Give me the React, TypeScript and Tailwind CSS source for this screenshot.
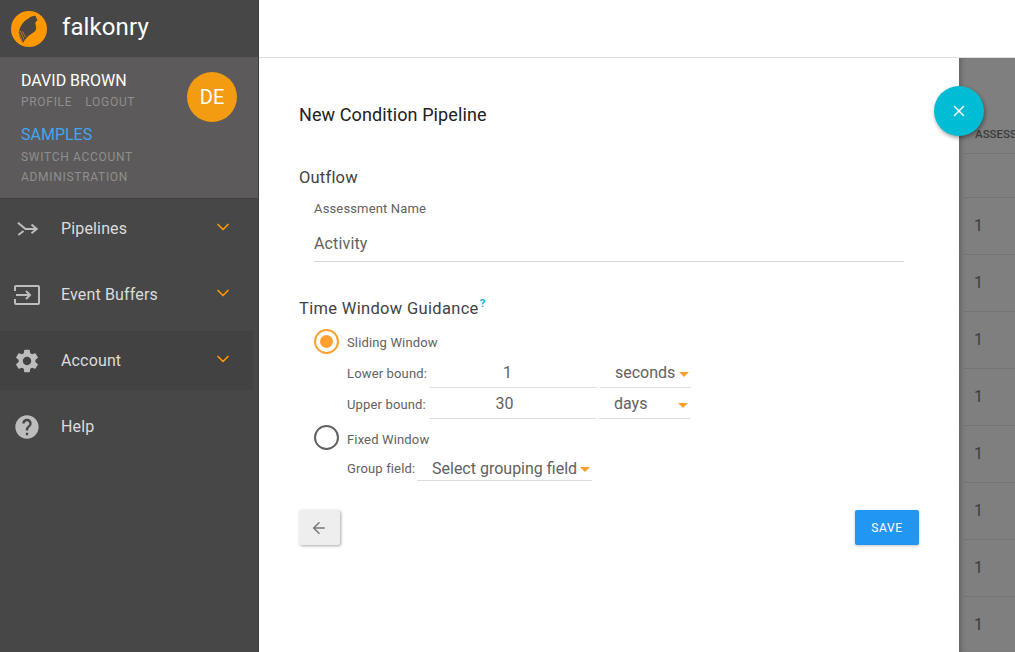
import { ArrowLeft, ChevronDown, X } from "lucide-react";

const navItems = [
  { label: "Pipelines", icon: "pipelines", chevron: true },
  { label: "Event Buffers", icon: "buffers", chevron: true },
  { label: "Account", icon: "account", chevron: true, active: true },
  { label: "Help", icon: "help", chevron: false },
];

function NavIcon({ name }: { name: string }) {
  if (name === "pipelines") {
    return (
      <svg width="26" height="24" viewBox="0 0 26 24" fill="none" stroke="#bdbdbd" strokeWidth="2">
        <path d="M5 5.7 L12.5 12 H23.5" />
        <path d="M5.3 18 L10.5 14" />
        <path d="M18.5 7.5 L23.7 12 L18.5 16.2" />
      </svg>
    );
  }
  if (name === "buffers") {
    return (
      <svg width="28" height="24" viewBox="0 0 28 24" fill="none" stroke="#bdbdbd" strokeWidth="2">
        <path d="M2 8 V4 A1 1 0 0 1 3 3 H25 A1 1 0 0 1 26 4 V20 A1 1 0 0 1 25 21 H3 A1 1 0 0 1 2 20 V16" />
        <path d="M3 12 H17" />
        <path d="M13 8 L17 12 L13 16" />
      </svg>
    );
  }
  if (name === "account") {
    return (
      <svg width="28" height="28" viewBox="0 0 24 24" fill="#bdbdbd">
        <path d="M19.14 12.94c.04-.3.06-.61.06-.94 0-.32-.02-.64-.07-.94l2.03-1.58a.49.49 0 0 0 .12-.61l-1.92-3.32a.488.488 0 0 0-.59-.22l-2.39.96c-.5-.38-1.03-.7-1.62-.94l-.36-2.54a.484.484 0 0 0-.48-.41h-3.84c-.24 0-.43.17-.47.41l-.36 2.54c-.59.24-1.13.57-1.62.94l-2.39-.96c-.22-.08-.47 0-.59.22L2.74 8.87c-.12.21-.08.47.12.61l2.03 1.58c-.05.3-.09.63-.09.94s.02.64.07.94l-2.03 1.58a.49.49 0 0 0-.12.61l1.92 3.32c.12.22.37.29.59.22l2.39-.96c.5.38 1.03.7 1.62.94l.36 2.54c.05.24.24.41.48.41h3.84c.24 0 .44-.17.47-.41l.36-2.54c.59-.24 1.13-.56 1.62-.94l2.39.96c.22.08.47 0 .59-.22l1.92-3.32c.12-.22.07-.47-.12-.61l-2.01-1.58zM12 15.6c-1.98 0-3.6-1.62-3.6-3.6s1.62-3.6 3.6-3.6 3.6 1.62 3.6 3.6-1.62 3.6-3.6 3.6z" />
      </svg>
    );
  }
  return (
    <svg width="28" height="28" viewBox="0 0 24 24" fill="#bdbdbd">
      <path d="M12 2C6.48 2 2 6.48 2 12s4.48 10 10 10 10-4.48 10-10S17.52 2 12 2zm1 17h-2v-2h2v2zm2.07-7.75-.9.92C13.45 12.9 13 13.5 13 15h-2v-.5c0-1.1.45-2.1 1.17-2.83l1.24-1.26c.37-.36.59-.86.59-1.41 0-1.1-.9-2-2-2s-2 .9-2 2H8c0-2.21 1.79-4 4-4s4 1.79 4 4c0 .88-.36 1.68-.93 2.25z" />
    </svg>
  );
}

function Logo() {
  return (
    <svg width="36" height="36" viewBox="0 0 36 36">
      <circle cx="18" cy="18" r="18" fill="#ff9800" />
      <path d="M12 32 C9 28 7.5 24 8.3 19 C10 13 14 9 17.3 7.7 C20 5.5 23 4.5 24.5 5 L26.5 9.3 C24.5 10.5 24 12 24.5 13.5 C25.5 16 25.5 18.5 24 20.3 C22 22.5 17 23.5 12 32 Z" fill="#4a4540" />
      <path d="M7.5 21 L11.5 31 M9.5 20 L13 28.5 M11.5 20.5 L14.5 26" stroke="#b9781f" strokeWidth="1" fill="none" />
    </svg>
  );
}

function Caret() {
  return <span className="block w-0 h-0 border-x-[5px] border-x-transparent border-t-[5px] border-t-[#ff9f2e]" />;
}

function Radio({ on }: { on: boolean }) {
  return (
    <span className={"w-[25px] h-[25px] rounded-full border-2 flex items-center justify-center " + (on ? "border-[#ff9f2e]" : "border-[#616161]")}>
      {on && <span className="w-[13px] h-[13px] rounded-full bg-[#ff9f2e]" />}
    </span>
  );
}

function BoundRow({ label, value, unit, labelWidth, valuePad }: { label: string; value: string; unit: string; labelWidth: string; valuePad: string }) {
  return (
    <div className="flex items-end h-[31px]">
      <span className={"text-[13px] text-[#616161] leading-[28px] tracking-[0.15px] " + labelWidth}>{label}</span>
      <span className={"w-[167px] h-[31px] border-b border-[#dedede] text-center text-[16px] leading-[32px] text-[#616161] " + valuePad}>{value}</span>
      <span className="ml-[3px] w-[91px] h-[31px] border-b border-[#dedede] flex items-center pt-[2px] pl-[15px] text-[16px] text-[#616161]">
        {unit}
        <span className="ml-auto mt-[3px] mr-[2px]"><Caret /></span>
      </span>
    </div>
  );
}

export default function App() {
  const rows = ["1", "1", "1", "1", "1", "1", "1", "1"];

  return (
    <div className="relative flex h-[652px] w-[1015px] overflow-hidden bg-white font-['Roboto',sans-serif]">
      <aside className="w-[259px] shrink-0 flex flex-col bg-[#474747] border-r border-[#3d3d3d]">
        <div className="h-[57px] flex items-center pl-[11px] gap-[15px]">
          <Logo />
          <span className="text-[24px] text-white tracking-[0.1px] pb-[3px]">falkonry</span>
        </div>
        <div className="h-[142px] bg-[#5c5a5a] border-b border-[#404040] pl-[21px] pt-[14px] relative">
          <div className="text-[16px] leading-[19px] text-white">DAVID BROWN</div>
          <div className="flex gap-[13px] mt-[4px] text-[12px] leading-[16px] text-[#8f8f8f] tracking-[0.7px]">
            <span>PROFILE</span>
            <span>LOGOUT</span>
          </div>
          <div className="mt-[15px] text-[16px] leading-[19px] text-[#42a5f5]">SAMPLES</div>
          <div className="mt-[5px] text-[12px] leading-[16px] text-[#8f8f8f] tracking-[0.7px]">SWITCH ACCOUNT</div>
          <div className="mt-[4px] text-[12px] leading-[16px] text-[#8f8f8f] tracking-[0.7px]">ADMINISTRATION</div>
          <div className="absolute left-[187px] top-[15px] w-[50px] h-[50px] rounded-full bg-[#f39c12] flex items-center justify-center text-[20px] text-white">DE</div>
        </div>
        <nav className="flex flex-col gap-[7px]">
          {navItems.map((item) => (
            <div key={item.label} className={"h-[59px] flex items-center " + (item.active ? "bg-[#424242] mr-[5px]" : "")}>
              <span className="w-[61px] pl-[13px] flex items-center"><NavIcon name={item.icon} /></span>
              <span className="text-[16px] text-[#dcdcdc] tracking-[0.15px] flex-1">{item.label}</span>
              {item.chevron && <ChevronDown size={20} strokeWidth={2} className={"text-[#ff9800] mb-[4px] " + (item.active ? "mr-[20px]" : "mr-[25px]")} />}
            </div>
          ))}
        </nav>
      </aside>

      <div className="flex-1 flex flex-col min-w-0">
        <header className="h-[58px] shrink-0 bg-white border-b border-[#e0e0e0]" />
        <div className="flex-1 flex min-h-0">
          <main className="w-[700px] shrink-0 bg-white pl-[40px] pr-[40px] pt-[46px]">
            <h1 className="text-[18px] leading-[22px] text-[#212121] tracking-[0.1px]">New Condition Pipeline</h1>

            <h2 className="mt-[41px] text-[16.5px] leading-[22px] text-[#424242] tracking-[0.2px]">Outflow</h2>
            <div className="ml-[15px] mt-[11px] w-[590px]">
              <div className="text-[13px] leading-[18px] text-[#616161] tracking-[0.15px]">Assessment Name</div>
              <div className="mt-[7px] h-[37px] border-b border-[#d6d6d6] text-[16px] leading-[38px] text-[#616161] tracking-[0.15px]">Activity</div>
            </div>

            <h2 className="mt-[36px] text-[16.5px] leading-[22px] text-[#424242] tracking-[0.32px]">
              Time Window Guidance<sup className="text-[11px] font-bold text-[#00bcd4] -top-[7px] ml-[1px]">?</sup>
            </h2>

            <div className="ml-[15px] mt-[9px]">
              <div className="flex items-center gap-[8px] h-[25px]">
                <Radio on />
                <span className="pt-[2px] text-[13px] text-[#616161] tracking-[0.15px]">Sliding Window</span>
              </div>
              <div className="ml-[33px] mt-[3px]">
                <BoundRow label="Lower bound:" value="1" unit="seconds" labelWidth="w-[83px]" valuePad="pr-[12px]" />
                <BoundRow label="Upper bound:" value="30" unit="days" labelWidth="w-[82px]" valuePad="pr-[16px]" />
              </div>
              <div className="flex items-center gap-[8px] h-[25px] mt-[6px]">
                <Radio on={false} />
                <span className="pt-[4px] text-[13px] text-[#616161] tracking-[0.15px]">Fixed Window</span>
              </div>
              <div className="ml-[33px] flex items-end h-[31px]">
                <span className="w-[70px] text-[13px] leading-[24px] text-[#616161] tracking-[0.15px]">Group field:</span>
                <span className="w-[175px] h-[31px] border-b border-[#dedede] flex items-center pl-[15px] pt-[8px] text-[16px] text-[#616161]">
                  Select grouping field
                  <span className="ml-[3px] mt-[1px]"><Caret /></span>
                </span>
              </div>
            </div>

            <div className="mt-[29px] flex justify-between items-center w-[620px]">
              <button className="w-[41px] h-[35px] pr-[2px] bg-[#eeeeee] rounded-[2px] shadow-[1px_1px_3px_rgba(0,0,0,0.35)] flex items-center justify-center text-[#757575]">
                <ArrowLeft size={18} strokeWidth={2} />
              </button>
              <button className="w-[64px] h-[35px] bg-[#2196f3] rounded-[2px] shadow-[0_1px_3px_rgba(0,0,0,0.25)] text-[12px] tracking-[0.6px] text-white">SAVE</button>
            </div>
          </main>

          <section className="flex-1 min-w-0 bg-[#7f7f7f] shadow-[inset_5px_0_5px_-3px_rgba(0,0,0,0.25)] overflow-hidden">
            <div className="h-[96px] border-b border-[#747474] pl-[16px] pt-[68px] text-[11.5px] font-medium leading-[16px] text-[#3c3c3c] whitespace-nowrap">ASSESSMENT</div>
            <div className="h-[44px] border-b border-[#747474]" />
            {rows.map((row, i) => (
              <div key={i} className="h-[57px] border-b border-[#747474] pl-[15px] flex items-center text-[16px] text-[#3c3c3c]">{row}</div>
            ))}
          </section>
        </div>
      </div>

      <button className="absolute left-[934px] top-[86px] w-[50px] h-[50px] rounded-full bg-[#00bcd4] shadow-[1px_2px_4px_rgba(0,0,0,0.4)] flex items-center justify-center text-white">
        <X size={18} strokeWidth={2} />
      </button>
    </div>
  );
}
